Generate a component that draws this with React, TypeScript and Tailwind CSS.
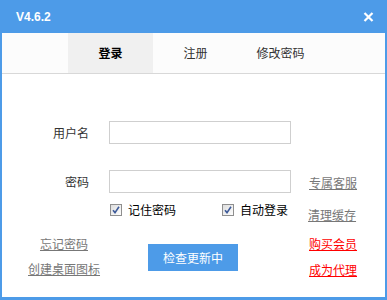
import React from "react";

const font = { fontFamily: '"Noto Sans CJK SC", "Noto Sans", sans-serif' };

function Check() {
  return (
    <svg width="12" height="12" viewBox="0 0 12 12" className="shrink-0">
      <defs>
        <linearGradient id="cbg" x1="0" y1="0" x2="1" y2="1">
          <stop offset="0" stopColor="#dcdcdc" />
          <stop offset="1" stopColor="#ffffff" />
        </linearGradient>
      </defs>
      <rect x="0.5" y="0.5" width="11" height="11" fill="url(#cbg)" stroke="#8f8f8f" />
      <path d="M3 6.2 L5 8.6 L9 2.8" fill="none" stroke="#3d5a99" strokeWidth="1.6" />
    </svg>
  );
}

export default function App() {
  return (
    <div className="w-[387px] h-[300px] bg-[#4d9be8] flex flex-col" style={font}>
      <div className="h-[33px] flex items-center justify-between pl-[16px] pr-[13px] shrink-0">
        <span className="text-white font-bold text-[12px] leading-none" style={{ fontFamily: '"Liberation Sans", Arial, sans-serif' }}>
          V4.6.2
        </span>
        <svg width="11" height="10" viewBox="0 0 11 10">
          <path d="M1.5 1 L9.5 9 M9.5 1 L1.5 9" stroke="#ffffff" strokeWidth="2.2" />
        </svg>
      </div>
      <div className="flex-1 mx-[2px] mb-[3px] bg-white flex flex-col">
        <div className="h-[41px] bg-[#fcfcfc] border-b border-[#d8d8d8] flex pl-[66px] shrink-0">
          <div className="w-[85px] bg-[#f0f0f0] flex items-center justify-center text-[12px] text-black font-bold">登录</div>
          <div className="w-[85px] flex items-center justify-center text-[12px] text-[#333]">注册</div>
          <div className="w-[85px] flex items-center justify-center text-[12px] text-[#333]">修改密码</div>
        </div>

        <div className="flex items-center mt-[47px] h-[23px]">
          <div className="w-[87px] text-right text-[12px] text-[#333]">用户名</div>
          <div className="ml-[20px] w-[182px] h-[23px] border border-[#cfcfcf] bg-white" />
        </div>

        <div className="flex items-center mt-[26px] h-[23px]">
          <div className="w-[87px] text-right text-[12px] text-[#333]">密码</div>
          <div className="ml-[20px] w-[182px] h-[23px] border border-[#cfcfcf] bg-white" />
          <span className="ml-[18px] mt-[3px] text-[12px] text-[#777] underline">专属客服</span>
        </div>

        <div className="flex items-start mt-[11px] h-[17px] pl-[108px]">
          <div className="flex items-center gap-[6px] h-[12px]">
            <Check />
            <span className="text-[12px] leading-[12px] text-black">记住密码</span>
          </div>
          <div className="flex items-center gap-[6px] h-[12px] ml-[46px]">
            <Check />
            <span className="text-[12px] leading-[12px] text-black">自动登录</span>
          </div>
          <span className="ml-[20px] mt-[5px] text-[12px] leading-[12px] text-[#777] underline">清理缓存</span>
        </div>

        <div className="flex items-start mt-[15px]">
          <div className="ml-[26px] w-[72px] flex flex-col items-center gap-[9px]">
            <span className="text-[12px] leading-[16px] text-[#777] underline">忘记密码</span>
            <span className="text-[12px] leading-[16px] text-[#777] underline">创建桌面图标</span>
          </div>
          <div className="ml-[48px] mt-[8px] w-[90px] h-[27px] bg-[#4d9be8] text-white text-[12px] flex items-center justify-center">
            检查更新中
          </div>
          <div className="ml-[71px] flex flex-col gap-[10px]">
            <span className="text-[12px] leading-[16px] text-[#ff0000] underline">购买会员</span>
            <span className="text-[12px] leading-[16px] text-[#ff0000] underline">成为代理</span>
          </div>
        </div>
      </div>
    </div>
  );
}
